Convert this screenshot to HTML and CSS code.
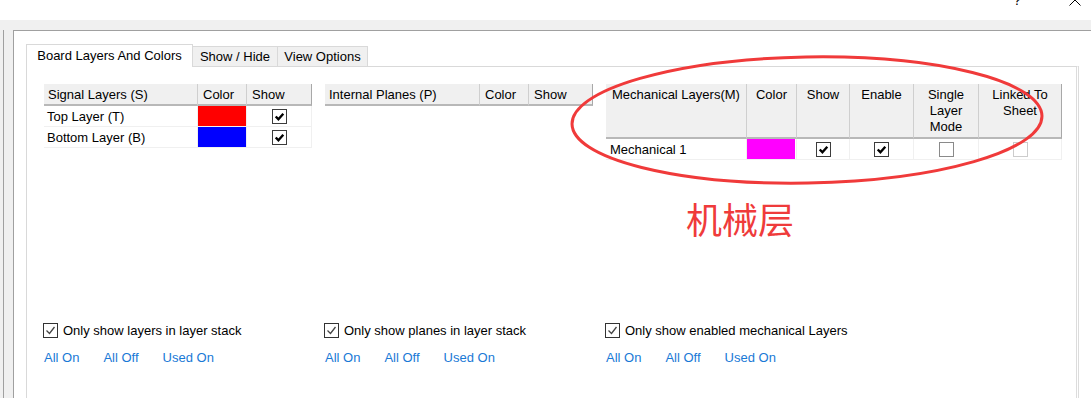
FILE: index.html
```html
<!DOCTYPE html>
<html lang="en">
<head>
    <meta charset="UTF-8">
    <title>View Configurations</title>
    <link rel="stylesheet" href="styles.css">
</head>
<body>
    <div class="titlebar">
        <span class="help">?</span>
        <svg class="close" width="12" height="12" viewBox="0 0 12 12"><path d="M0.5 0.5 L11.5 11.5 M11.5 0.5 L0.5 11.5" stroke="#000" stroke-width="1" fill="none"/></svg>
    </div>

    <div class="frame">
        <div class="side"></div>
        <div class="panel">
            <div class="tabs">
                <div class="tab active" style="width:167px">Board Layers And Colors</div>
                <div class="tab" style="width:85px">Show / Hide</div>
                <div class="tab" style="width:90px">View Options</div>
            </div>

            <div class="page">
                <!-- signal layers -->
                <div class="group">
                    <div class="tbl-area">
                        <table class="grid" style="width:268px">
                            <colgroup><col style="width:154px"><col style="width:49px"><col style="width:65px"></colgroup>
                            <tr><th>Signal Layers (S)</th><th>Color</th><th>Show</th></tr>
                            <tr>
                                <td>Top Layer (T)</td>
                                <td class="sw"><div class="swatch red"></div></td>
                                <td class="c"><span class="cb on"><svg viewBox="0 0 12 12"><path d="M2.5 6 L5 8.5 L9.5 3.5"/></svg></span></td>
                            </tr>
                            <tr>
                                <td>Bottom Layer (B)</td>
                                <td class="sw"><div class="swatch blue"></div></td>
                                <td class="c"><span class="cb on"><svg viewBox="0 0 12 12"><path d="M2.5 6 L5 8.5 L9.5 3.5"/></svg></span></td>
                            </tr>
                        </table>
                    </div>
                    <label class="opt"><span class="box"><svg viewBox="0 0 13 13"><path d="M2.5 6.5 L5.5 9.5 L10.5 3"/></svg></span>Only show layers in layer stack</label>
                    <div class="links"><a>All On</a><a>All Off</a><a>Used On</a></div>
                </div>

                <!-- internal planes -->
                <div class="group">
                    <div class="tbl-area">
                        <table class="grid" style="width:268px">
                            <colgroup><col style="width:155px"><col style="width:49px"><col style="width:64px"></colgroup>
                            <tr><th>Internal Planes (P)</th><th>Color</th><th>Show</th></tr>
                        </table>
                    </div>
                    <label class="opt"><span class="box"><svg viewBox="0 0 13 13"><path d="M2.5 6.5 L5.5 9.5 L10.5 3"/></svg></span>Only show planes in layer stack</label>
                    <div class="links"><a>All On</a><a>All Off</a><a>Used On</a></div>
                </div>

                <!-- mechanical layers -->
                <div class="group">
                    <div class="tbl-area">
                        <table class="grid mech" style="width:456px">
                            <colgroup><col style="width:141px"><col style="width:50px"><col style="width:53px"><col style="width:64px"><col style="width:65px"><col style="width:83px"></colgroup>
                            <tr><th>Mechanical Layers(M)</th><th>Color</th><th>Show</th><th>Enable</th><th>Single<br>Layer<br>Mode</th><th>Linked To<br>Sheet</th></tr>
                            <tr>
                                <td>Mechanical 1</td>
                                <td class="sw"><div class="swatch magenta"></div></td>
                                <td class="c"><span class="cb on"><svg viewBox="0 0 12 12"><path d="M2.5 6 L5 8.5 L9.5 3.5"/></svg></span></td>
                                <td class="c"><span class="cb on"><svg viewBox="0 0 12 12"><path d="M2.5 6 L5 8.5 L9.5 3.5"/></svg></span></td>
                                <td class="c"><span class="cb off"></span></td>
                                <td class="c"><span class="cb dis"></span></td>
                            </tr>
                        </table>
                    </div>
                    <label class="opt"><span class="box"><svg viewBox="0 0 13 13"><path d="M2.5 6.5 L5.5 9.5 L10.5 3"/></svg></span>Only show enabled mechanical Layers</label>
                    <div class="links"><a>All On</a><a>All Off</a><a>Used On</a></div>
                </div>
            </div>
        </div>
    </div>

    <!-- red annotation drawn over the dialog -->
    <svg class="ring" width="480" height="136" viewBox="0 0 480 136">
        <ellipse cx="239" cy="66" rx="235" ry="63" transform="rotate(-1 239 66)" fill="none" stroke="#f03a3a" stroke-width="3"/>
    </svg>
    <div class="note">机械层</div>
</body>
</html>
```

FILE: styles.css
```css
* { box-sizing: border-box; }
body { margin: 0; width: 1091px; height: 398px; overflow: hidden; position: relative; background: #fff; color: #000; font: 13px "Liberation Sans", Arial, sans-serif; }

.titlebar { height: 20px; display: flex; justify-content: flex-end; align-items: flex-start; gap: 48px; padding-right: 10px; overflow: hidden; }
.help { font-size: 14px; line-height: 14px; margin-top: -7px; }
.close { margin-top: -6px; }

.frame { display: flex; height: 378px; background: #f0f0f0; padding: 10px 0 0 3px; }
.side { width: 10px; border-left: 1px solid #a0a0a0; }
.panel { flex: 1; background: #fff; border-top: 1px solid #a0a0a0; border-left: 1px solid #a0a0a0; padding: 13px 12px 0 12px; }

.tabs { display: flex; align-items: flex-end; height: 22px; }
.tab { height: 20px; line-height: 19px; text-align: center; white-space: nowrap; background: #f0f0f0; border: 1px solid #d9d9d9; border-left: none; border-bottom: none; }
.tab.active { height: 23px; line-height: 22px; background: #fff; border-left: 1px solid #d9d9d9; margin-bottom: -1px; position: relative; z-index: 1; }

.page { height: 340px; border: 1px solid #d9d9d9; border-right: 3px double #dcdcdc; padding: 17px 0 0 17px; display: grid; grid-template-columns: 281px 281px 1fr; align-content: start; }
.group { display: flex; flex-direction: column; }
.tbl-area { height: 238px; }

.grid { table-layout: fixed; border-collapse: separate; border-spacing: 0; }
.grid th { background: #f0f0f0; font-weight: normal; text-align: left; height: 22px; padding: 2px 5px 0; line-height: 18px; vertical-align: top; white-space: nowrap; border-right: 1px solid #cfcfcf; border-bottom: 2px solid #b8b8b8; }
.grid th:first-child { padding-left: 4px; }
.grid th:last-child { border-right-color: #a8a8a8; }
.grid td { height: 21px; padding: 1px 3px 0; white-space: nowrap; border-right: 1px solid #f0f0f0; border-bottom: 1px solid #f0f0f0; }
.grid td.sw { padding: 0; }
.grid td.c { text-align: center; padding: 0; }

.mech th { height: 55px; padding-top: 3px; line-height: 16px; text-align: center; }
.mech th:first-child { text-align: left; padding-left: 6px; }
.mech td:first-child { padding-left: 4px; }

.swatch { width: 48px; height: 20px; }
.red { background: #ff0000; }
.blue { background: #0000ff; }
.magenta { background: #ff00ff; }

.cb { display: inline-block; width: 15px; height: 15px; vertical-align: middle; border: 1px solid #3c3c3c; background: #fff; }
.cb svg { display: block; width: 13px; height: 13px; }
.cb path { fill: none; stroke: #000; stroke-width: 2.2; }
.cb.off { border-color: #8a8a8a; }
.cb.dis { border-color: #cccccc; }

.opt { display: flex; align-items: center; gap: 5px; height: 17px; margin-left: -1px; white-space: nowrap; }
.box { width: 15px; height: 15px; border: 1px solid #333; background: #fff; }
.box svg { display: block; width: 13px; height: 13px; }
.box path { fill: none; stroke: #444; stroke-width: 1.3; }

.links { display: flex; gap: 24px; margin-top: 11px; line-height: 16px; }
.links a { color: #1979d6; cursor: pointer; }

.ring { position: absolute; left: 568px; top: 54px; }
.note { position: absolute; left: 686px; top: 200px; font: 36px/36px "Noto Sans CJK SC", sans-serif; color: #ef3b3b; }
```
